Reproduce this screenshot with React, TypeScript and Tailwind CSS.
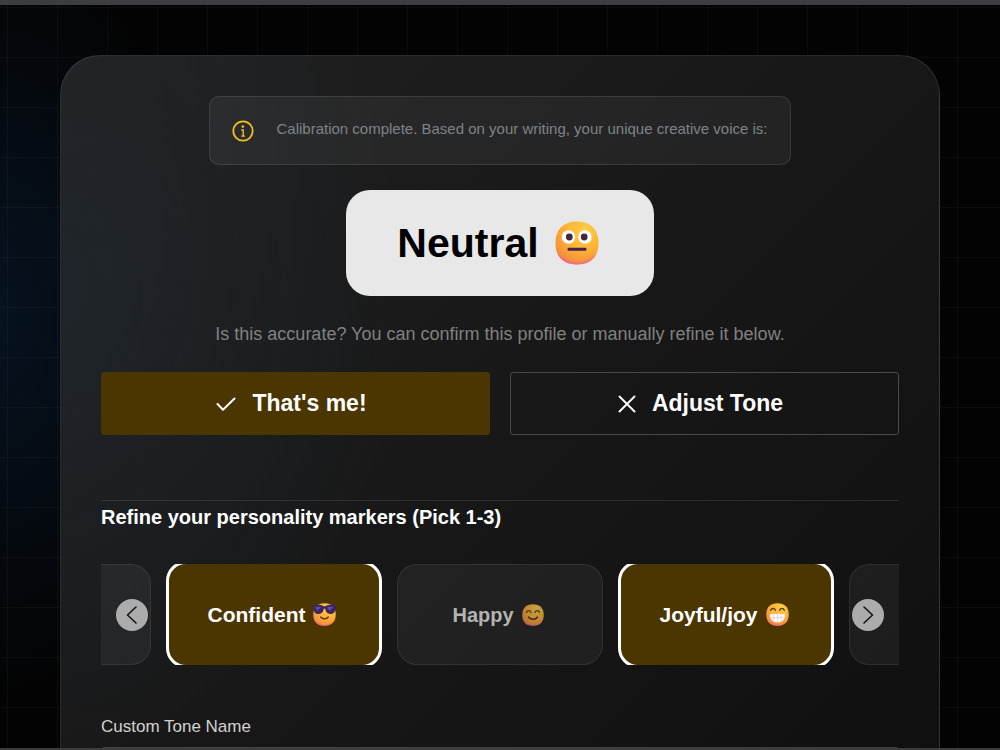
import React, { useState } from 'react'

type FaceKind = 'neutral' | 'cool' | 'smile' | 'grin'

const facePath = 'M22 0.5C36 0.5 43.500 8.500 43.500 22S36 43.500 22 43.500 0.5 35.500 0.5 22 8 0.5 22 0.5Z'

const Face = ({ kind, className }: { kind: FaceKind; className: string }) => {
  const base = `${kind}-base`
  const blush = `${kind}-blush`
  return (
    <svg viewBox="0 0 44 44" className={className} role="img" aria-label={kind}>
      <defs>
        <radialGradient id={base} cx="0.66" cy="0.22" r="0.85">
          <stop offset="0" stopColor="#ffcf4a" />
          <stop offset="0.5" stopColor="#fdb434" />
          <stop offset="1" stopColor="#f2873c" />
        </radialGradient>
        <radialGradient id={blush} cx="0.52" cy="0.34" r="0.68">
          <stop offset="0.84" stopColor="#f05c92" stopOpacity="0" />
          <stop offset="1" stopColor="#f05cb0" stopOpacity="0.9" />
        </radialGradient>
      </defs>
      <path d={facePath} fill={`url(#${base})`} />
      <path d={facePath} fill={`url(#${blush})`} />
      {kind === 'neutral' && (
        <>
          <circle cx="13.5" cy="16" r="6.7" fill="#fff" />
          <circle cx="30" cy="16" r="6.7" fill="#fff" />
          <circle cx="14.3" cy="16" r="3.4" fill="#45283c" />
          <circle cx="29.2" cy="16" r="3.4" fill="#45283c" />
          <rect x="12.5" y="26.800" width="19" height="3" rx="1.2" fill="#45204f" />
        </>
      )}
      {kind === 'cool' && (
        <>
          <path d="M0 6C7 2 16 3 20 6H24C28 3 37 2 44 6V9C43 17 39 21 33 21C27 21 24 16 23.500 11H20.500C20 16 17 21 11 21C5 21 1 17 0 9Z" fill="#3b2468" />
          <path d="M4 8C8 6 13 6 16 8L8 15ZM27 8C31 6 36 6 39 8L31 15Z" fill="#6048a0" />
          <path d="M15 27C18 31 26 31 29 27" fill="none" stroke="#5a2535" strokeWidth="3" strokeLinecap="round" />
        </>
      )}
      {kind === 'smile' && (
        <>
          <path d="M9 17C11 12 16 12 18 17M26 17C28 12 33 12 35 17" fill="none" stroke="#5b3524" strokeWidth="2.6" strokeLinecap="round" />
          <path d="M13 26C17 32 27 32 31 26" fill="none" stroke="#5b2535" strokeWidth="3" strokeLinecap="round" />
        </>
      )}
      {kind === 'grin' && (
        <>
          <path d="M9 14C11 9 16 9 18 14M26 14C28 9 33 9 35 14" fill="none" stroke="#5b3524" strokeWidth="2.6" strokeLinecap="round" />
          <path d="M8 21H36C37.500 30 32 37 22 37S6.500 30 8 21Z" fill="#fff" />
          <path d="M7.500 28H36.500M15 21V35M22 21V37M29 21V35" stroke="#d9b9ee" strokeWidth="1.2" />
        </>
      )}
    </svg>
  )
}

const InfoMark = () => (
  <svg viewBox="0 0 22 22" className="size-[22px] shrink-0 text-[#f0bd25]" fill="none" stroke="currentColor" strokeWidth="1.8" aria-hidden="true">
    <circle cx="11" cy="11" r="9.7" />
    <circle cx="10.8" cy="6.600" r="1.300" fill="currentColor" stroke="none" />
    <path d="M9.200 10H11.200V16M9.200 16.100H13" strokeWidth="1.4" />
  </svg>
)

const CheckMark = () => (
  <svg viewBox="0 0 20 14" className="w-5 h-3.5 shrink-0" fill="none" stroke="currentColor" strokeWidth="2" strokeLinecap="round" strokeLinejoin="round" aria-hidden="true">
    <path d="M1.500 7L7 12.700L18.500 1.500" />
  </svg>
)

const CrossMark = () => (
  <svg viewBox="0 0 18 18" className="size-[18px] shrink-0" fill="none" stroke="currentColor" strokeWidth="1.9" strokeLinecap="round" aria-hidden="true">
    <path d="M1.500 1.500L16.500 16.500M16.500 1.500L1.500 16.500" />
  </svg>
)

const Arrow = ({ d }: { d: string }) => (
  <svg viewBox="0 0 12 20" className="w-3 h-5" fill="none" stroke="#141414" strokeWidth="1.6" strokeLinecap="round" strokeLinejoin="round" aria-hidden="true">
    <path d={d} />
  </svg>
)

const markers: { name: string; face?: FaceKind }[] = [
  { name: '' },
  { name: 'Confident', face: 'cool' },
  { name: 'Happy', face: 'smile' },
  { name: 'Joyful/joy', face: 'grin' },
  { name: '' },
]

const App = () => {
  const [picked, setPicked] = useState<string[]>(['Confident', 'Joyful/joy'])

  const toggle = (name: string) => {
    if (!name) return
    setPicked(picked.includes(name) ? picked.filter((p) => p !== name) : [...picked, name].slice(-3))
  }

  return (
    <div className="h-screen flex flex-col bg-[#030303] text-white font-['Liberation_Sans',Arial,sans-serif]">
      <div className="h-[5px] shrink-0 bg-[#3e3d42]" />
      <main className="flex-1 min-h-0 overflow-hidden px-[60px] pt-[50px] bg-[linear-gradient(to_right,rgba(255,255,255,0.03)_1px,transparent_1px),linear-gradient(to_bottom,rgba(255,255,255,0.03)_1px,transparent_1px),radial-gradient(ellipse_200px_380px_at_0px_310px,#061220,transparent)] bg-[size:50px_50px,50px_50px,100%_100%] bg-[position:7px_2px,7px_2px,0_0]">
        <section className="flex flex-col rounded-[40px] border border-white/10 p-10 bg-[radial-gradient(ellipse_340px_460px_at_0px_240px,rgba(35,58,80,0.25),transparent),linear-gradient(135deg,#212121,#181818_45%,#0f0f0f)]">
          <div className="self-center flex items-center gap-[22px] h-[69px] px-[22px] rounded-[10px] border border-white/10 bg-white/5">
            <InfoMark />
            <p className="pb-1 text-[15px] leading-5 text-[#7d838a]">Calibration complete. Based on your writing, your unique creative voice is:</p>
          </div>

          <div className="self-center mt-[25px] h-[106px] pl-[51px] pr-[55px] flex items-center gap-4 rounded-3xl bg-[#e8e8e8] text-black">
            <h1 className="text-[41px] leading-[48px] font-bold">Neutral</h1>
            <Face kind="neutral" className="size-11" />
          </div>

          <p className="my-[26px] text-center text-lg leading-6 text-[#818181]">Is this accurate? You can confirm this profile or manually refine it below.</p>

          <div className="grid grid-cols-2 gap-5">
            <button className="h-[63px] pr-2 flex items-center justify-center gap-4 rounded-[3px] bg-[#4b3500] text-[23px] font-bold">
              <CheckMark />
              That's me!
            </button>
            <button className="h-[63px] pr-2 flex items-center justify-center gap-4 rounded-[3px] border border-[#4a4a4a] text-[23px] font-bold">
              <CrossMark />
              Adjust Tone
            </button>
          </div>

          <div className="mt-[65px] pt-1 border-t border-white/10">
            <h2 className="text-xl leading-6 font-bold">Refine your personality markers (Pick 1-3)</h2>
          </div>

          <div className="relative mt-[35px]">
            <div className="flex items-center justify-center gap-5 h-[101px] overflow-hidden">
              {markers.map((m, i) => (
                <button
                  key={i}
                  aria-pressed={picked.includes(m.name)}
                  aria-label={m.name || 'More markers'}
                  onClick={() => toggle(m.name)}
                  className={
                    picked.includes(m.name)
                      ? 'shrink-0 w-[216px] h-[107px] -mx-[5px] pr-1 flex items-center justify-center gap-2 rounded-[20px] border-3 border-white bg-[#4b3500] text-[21px] font-bold'
                      : 'shrink-0 w-[206px] h-[101px] pr-1 flex items-center justify-center gap-2 rounded-[20px] border border-white/8 bg-white/5 text-xl font-bold text-[#b3b3b3]'
                  }
                >
                  {m.name}
                  {m.face && <Face kind={m.face} className={picked.includes(m.name) ? 'size-[23px]' : 'size-[22px] opacity-75'} />}
                </button>
              ))}
            </div>
            <button aria-label="Previous" className="absolute left-[15px] top-[35px] size-8 rounded-full flex items-center justify-center bg-[#acacac]">
              <Arrow d="M10 2L1.500 10L10 18" />
            </button>
            <button aria-label="Next" className="absolute right-[15px] top-[35px] size-8 rounded-full flex items-center justify-center bg-[#acacac]">
              <Arrow d="M2 2L10.500 10L2 18" />
            </button>
          </div>

          <label htmlFor="tone-name" className="mt-[50px] text-[17px] leading-6 text-[#d2d2d2]">Custom Tone Name</label>
          <input id="tone-name" type="text" className="mt-2 w-full h-14 px-4 rounded-[4px] border border-white/15 bg-white/5 text-[17px]" />
        </section>
      </main>
      <div className="h-0.5 shrink-0 bg-[#3c3c3c]" />
    </div>
  )
}

export default App
